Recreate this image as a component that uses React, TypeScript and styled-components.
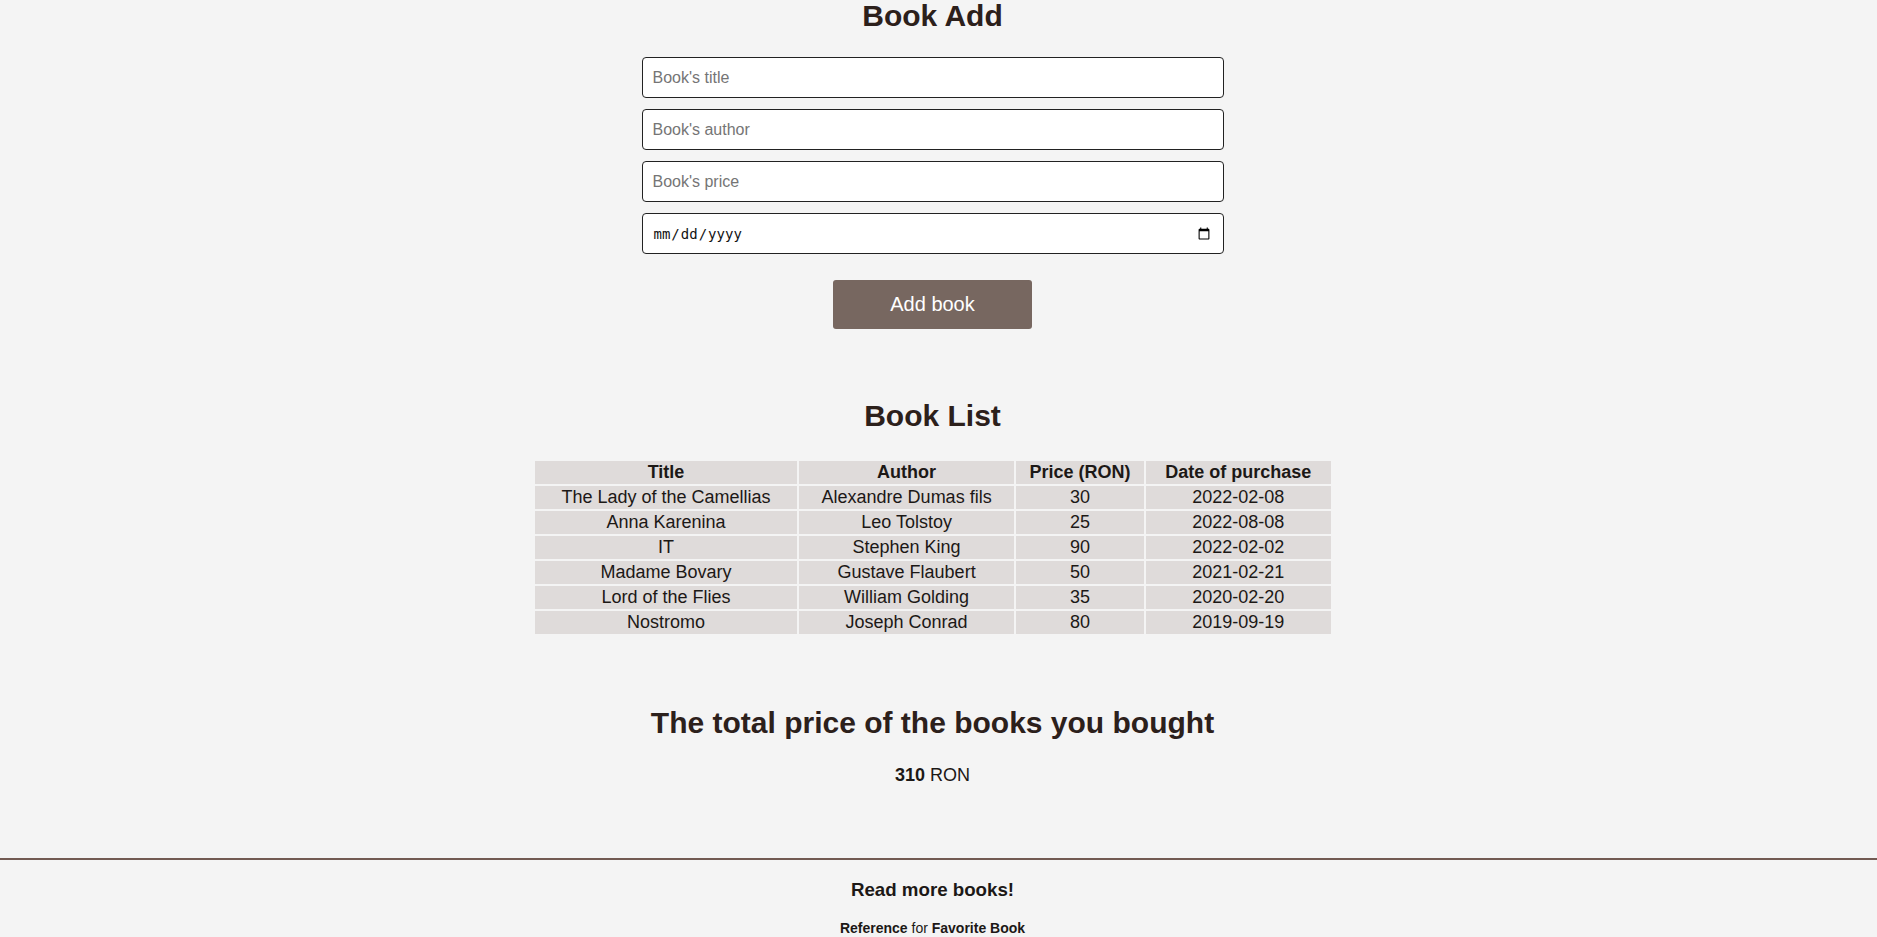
import React from "react";
import styled, { createGlobalStyle } from "styled-components";

const GlobalStyle = createGlobalStyle`
  html, body {
    margin: 0;
    padding: 0;
    background: #f4f4f4;
  }
  body {
    font-family: "Liberation Sans", Arial, sans-serif;
    color: #1f1a18;
  }
`;

const Page = styled.div`
  display: flex;
  flex-direction: column;
  align-items: center;
  padding-right: 12px;
`;

const Section = styled.section`
  display: flex;
  flex-direction: column;
  align-items: center;
  width: 100%;
`;

const Heading = styled.h1<{ $top: number; $bottom: number }>`
  margin: ${(p) => p.$top}px 0 ${(p) => p.$bottom}px;
  font-size: 30px;
  font-weight: 700;
  color: #2c201b;
  line-height: 34px;
`;

const Form = styled.form`
  display: flex;
  flex-direction: column;
  align-items: center;
  gap: 11px;
`;

const Input = styled.input`
  box-sizing: border-box;
  width: 582px;
  height: 41px;
  padding: 0 10px;
  border: 1px solid #222;
  border-radius: 4px;
  background: #fff;
  font-family: "Liberation Sans", Arial, sans-serif;
  font-size: 16px;
  color: #222;
  outline: none;
  &::placeholder {
    color: #757575;
  }
`;

const DateInput = styled(Input)`
  font-family: "DejaVu Sans Mono", "Liberation Mono", monospace;
  font-size: 14px;
  color: #111;
`;

const Button = styled.button`
  margin-top: 15px;
  width: 199px;
  height: 49px;
  border: none;
  border-radius: 3px;
  background: #776760;
  color: #fff;
  font-family: "Liberation Sans", Arial, sans-serif;
  font-size: 20px;
  cursor: pointer;
`;

const Table = styled.table`
  width: 800px;
  border-spacing: 2px;
  font-size: 18px;
  color: #1c1816;
`;

const Th = styled.th`
  background: #dfdbda;
  padding: 1px;
  font-weight: 700;
  line-height: 21px;
`;

const Td = styled.td`
  background: #dfdbda;
  padding: 1px;
  text-align: center;
  line-height: 21px;
`;

const Total = styled.p`
  margin: 0;
  font-size: 18px;
  line-height: 21px;
  color: #1c1816;
`;

const Footer = styled.footer`
  align-self: stretch;
  margin-top: 72px;
  margin-right: -12px;
  padding-right: 12px;
  border-top: 2px solid #725a52;
  display: flex;
  flex-direction: column;
  align-items: center;
`;

const FooterTitle = styled.h3`
  margin: 19px 0 0;
  font-size: 18.72px;
  line-height: 22px;
  color: #1c1816;
`;

const FooterNote = styled.p`
  margin: 19px 0 0;
  font-size: 14px;
  line-height: 16px;
  color: #1c1816;
`;

const books = [
  { title: "The Lady of the Camellias", author: "Alexandre Dumas fils", price: 30, date: "2022-02-08" },
  { title: "Anna Karenina", author: "Leo Tolstoy", price: 25, date: "2022-08-08" },
  { title: "IT", author: "Stephen King", price: 90, date: "2022-02-02" },
  { title: "Madame Bovary", author: "Gustave Flaubert", price: 50, date: "2021-02-21" },
  { title: "Lord of the Flies", author: "William Golding", price: 35, date: "2020-02-20" },
  { title: "Nostromo", author: "Joseph Conrad", price: 80, date: "2019-09-19" },
];

export default function App() {
  const total = books.reduce((s, b) => s + b.price, 0);
  return (
    <Page>
      <GlobalStyle />
      <Section>
        <Heading $top={-1} $bottom={24}>Book Add</Heading>
        <Form onSubmit={(e) => e.preventDefault()}>
          <Input type="text" placeholder="Book's title" />
          <Input type="text" placeholder="Book's author" />
          <Input type="text" placeholder="Book's price" />
          <DateInput type="date" />
          <Button type="submit">Add book</Button>
        </Form>
      </Section>
      <Section>
        <Heading $top={70} $bottom={26}>Book List</Heading>
        <Table>
          <thead>
            <tr>
              <Th>Title</Th>
              <Th>Author</Th>
              <Th>Price (RON)</Th>
              <Th>Date of purchase</Th>
            </tr>
          </thead>
          <tbody>
            {books.map((b) => (
              <tr key={b.title}>
                <Td>{b.title}</Td>
                <Td>{b.author}</Td>
                <Td>{b.price}</Td>
                <Td>{b.date}</Td>
              </tr>
            ))}
          </tbody>
        </Table>
      </Section>
      <Section>
        <Heading $top={70} $bottom={25}>The total price of the books you bought</Heading>
        <Total>
          <b>{total}</b> RON
        </Total>
      </Section>
      <Footer>
        <FooterTitle>Read more books!</FooterTitle>
        <FooterNote>
          <b>Reference</b> for <b>Favorite Book</b>
        </FooterNote>
      </Footer>
    </Page>
  );
}
